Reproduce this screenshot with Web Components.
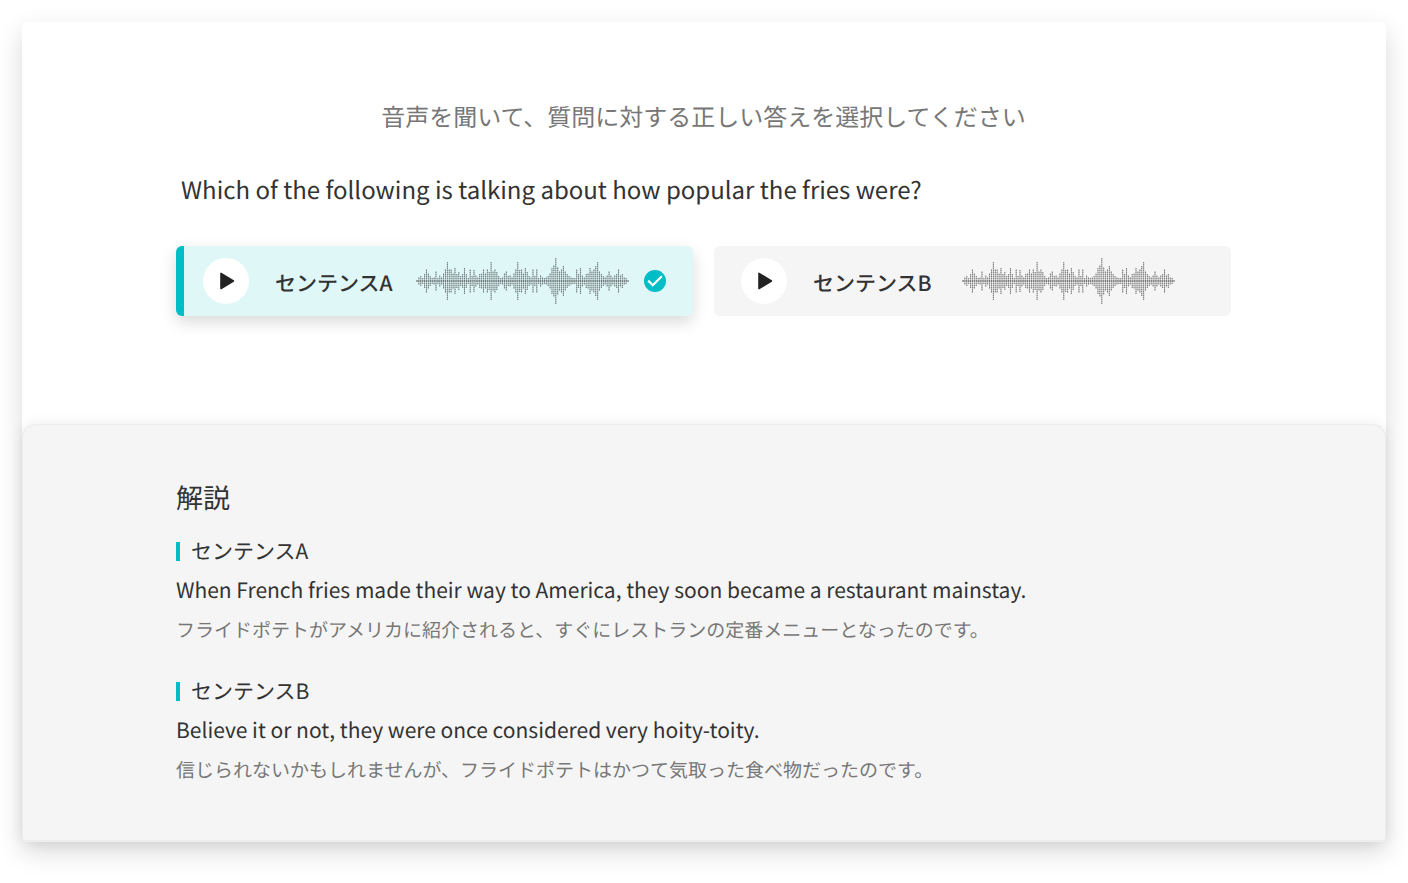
<!DOCTYPE html>
<html lang="ja">
<head>
<meta charset="utf-8">
<meta name="viewport" content="width=device-width, initial-scale=1">
<title>リスニング</title>
<style>
  body {
    box-sizing: border-box;
    min-height: 100vh;
    margin: 0;
    padding: 22px;
    background: #fff;
    color: #333;
    font-family: "Noto Sans CJK JP", "Noto Sans", sans-serif;
    text-rendering: geometricPrecision;
    --accent: #00bdc6;
    --accent-light: #dff7f7;
    --surface: #f5f5f5;
    --muted: #777;
  }
</style>
</head>
<body>
<quiz-card>
  <quiz-question instruction="音声を聞いて、質問に対する正しい答えを選択してください">
    Which of the following is talking about how popular the fries were?
    <audio-choice slot="choices" name="センテンスA" selected></audio-choice>
    <audio-choice slot="choices" name="センテンスB"></audio-choice>
  </quiz-question>
  <quiz-explanation slot="explanation" heading="解説">
    <sentence-note name="センテンスA">
      When French fries made their way to America, they soon became a restaurant mainstay.
      <span slot="translation">フライドポテトがアメリカに紹介されると、すぐにレストランの定番メニューとなったのです。</span>
    </sentence-note>
    <sentence-note name="センテンスB">
      Believe it or not, they were once considered very hoity-toity.
      <span slot="translation">信じられないかもしれませんが、フライドポテトはかつて気取った食べ物だったのです。</span>
    </sentence-note>
  </quiz-explanation>
</quiz-card>

<script>
function makeTemplate(html) {
  const template = document.createElement("template");
  template.innerHTML = html;
  return template;
}

const cardTemplate = makeTemplate(`
  <style>
    :host {
      display: block;
      border-radius: 5px;
      background: #fff;
      box-shadow: 0 10px 26px rgba(0, 0, 0, 0.15);
    }
  </style>
  <main>
    <slot></slot>
    <slot name="explanation"></slot>
  </main>
`);

class QuizCard extends HTMLElement {
  constructor() {
    super();
    this.attachShadow({mode: "open"});
    this.shadowRoot.appendChild(cardTemplate.content.cloneNode(true));
  }
}

const questionTemplate = makeTemplate(`
  <style>
    :host {
      display: block;
      padding: 76px 155px 108px 154px;
    }

    .instruction {
      margin: 0 0 37px;
      font-size: 24px;
      line-height: 36px;
      color: var(--muted);
      text-align: center;
    }

    .question {
      margin: 0 0 39px;
      padding-left: 5px;
      font-size: 24px;
      font-weight: 400;
      line-height: 36px;
    }

    .choices {
      display: grid;
      grid-template-columns: repeat(auto-fit, minmax(500px, 1fr));
      gap: 21px;
    }
  </style>
  <p class="instruction"></p>
  <h1 class="question"><slot></slot></h1>
  <div class="choices" role="radiogroup"><slot name="choices"></slot></div>
`);

class QuizQuestion extends HTMLElement {
  constructor() {
    super();
    this.attachShadow({mode: "open"});
    this.shadowRoot.appendChild(questionTemplate.content.cloneNode(true));
    this.shadowRoot.querySelector(".instruction").textContent = this.getAttribute("instruction");
  }

  connectedCallback() {
    // Only one choice stays selected
    this.addEventListener("choice-selected", (event) => {
      this.querySelectorAll("audio-choice").forEach((choice) => {
        choice.toggleAttribute("selected", choice === event.target);
      });
    });
  }
}

const choiceTemplate = makeTemplate(`
  <style>
    :host {
      display: flex;
      align-items: center;
      box-sizing: border-box;
      height: 70px;
      padding: 0 27px;
      border-radius: 6px;
      background: var(--surface);
    }

    :host([selected]) {
      background: linear-gradient(to right, var(--accent) 8px, var(--accent-light) 8px);
      box-shadow: 0 6px 16px rgba(0, 0, 0, 0.15);
    }

    .play {
      display: grid;
      place-items: center;
      flex: none;
      width: 46px;
      height: 46px;
      padding: 0;
      border: none;
      border-radius: 50%;
      background: #fff;
      cursor: pointer;
    }

    label {
      margin: 4px 30px 0 26px;
      font-size: 21px;
      font-weight: 500;
      line-height: 32px;
      white-space: nowrap;
      cursor: pointer;
    }

    :host([selected]) label {
      margin-right: 23px;
    }

    .mark {
      display: grid;
      flex: none;
      width: 22px;
      height: 22px;
      margin-left: 15px;
    }

    .mark > * {
      grid-area: 1 / 1;
      width: 22px;
      height: 22px;
      margin: 0;
    }

    input {
      appearance: none;
      border-radius: 50%;
      cursor: pointer;
    }

    input:checked {
      background: var(--accent);
    }

    .tick {
      visibility: hidden;
      pointer-events: none;
    }

    input:checked + .tick {
      visibility: visible;
    }
  </style>
  <button class="play" type="button">
    <svg width="18" height="18" viewBox="0 0 18 18" aria-hidden="true">
      <path d="M4 1.4v15.2L16.4 9z" fill="#222" stroke="#222" stroke-width="1.6" stroke-linejoin="round"/>
    </svg>
  </button>
  <label for="choice"></label>
  <sound-wave></sound-wave>
  <span class="mark">
    <input id="choice" type="radio">
    <svg class="tick" viewBox="0 0 22 22" aria-hidden="true">
      <path d="M4.2 10.6l4.6 4.6 9-9" fill="none" stroke="#fff" stroke-width="2.2"/>
    </svg>
  </span>
`);

class AudioChoice extends HTMLElement {
  static get observedAttributes() {
    return ["selected"];
  }

  constructor() {
    super();
    this.attachShadow({mode: "open"});
    this.shadowRoot.appendChild(choiceTemplate.content.cloneNode(true));
    this.radio = this.shadowRoot.querySelector("input");
    this.shadowRoot.querySelector("label").textContent = this.getAttribute("name");
    this.shadowRoot.querySelector(".play").setAttribute("aria-label", this.getAttribute("name"));
  }

  connectedCallback() {
    this.radio.addEventListener("change", () => {
      this.dispatchEvent(new CustomEvent("choice-selected", {bubbles: true}));
    });
  }

  attributeChangedCallback() {
    this.radio.checked = this.hasAttribute("selected");
  }
}

// Half height of every bar, left to right
const waveLevels = [
  1, 4, 5, 3, 7, 12, 8, 5, 3, 4, 10, 3, 6, 4, 8, 12, 19, 12, 12, 8, 13, 7, 9, 5, 7, 13, 7, 3,
  12, 5, 11, 6, 4, 7, 8, 12, 8, 12, 9, 19, 10, 12, 9, 5, 3, 4, 8, 10, 5, 6, 4, 8, 12, 19,
  11, 12, 8, 13, 9, 5, 4, 12, 5, 12, 3, 6, 4, 3, 4, 5, 8, 13, 16, 23, 14, 10, 12, 15, 10,
  7, 5, 4, 3, 3, 12, 7, 13, 6, 4, 7, 8, 13, 10, 12, 15, 19, 10, 7, 5, 4, 6, 10, 6, 4, 6,
  7, 12, 6, 7, 4, 3, 1
];

class SoundWave extends HTMLElement {
  constructor() {
    super();
    this.attachShadow({mode: "open"});
    const width = waveLevels.length * 2;
    const bars = waveLevels.map((level, i) => `M${i * 2 + 1} 24v${-level}M${i * 2 + 1} 24v${level}`).join("");
    this.shadowRoot.innerHTML = `
      <style>
        :host {
          display: block;
          flex: none;
          width: 213px;
          height: 48px;
        }

        svg {
          display: block;
          width: 100%;
          height: 100%;
        }
      </style>
      <svg viewBox="0 0 ${width} 48" preserveAspectRatio="none" aria-hidden="true">
        <g fill="none" stroke="#333">
          <path d="${bars}" stroke-width="1" stroke-opacity="0.35"/>
          <path d="${bars}" stroke-width="1.2" stroke-opacity="0.4" stroke-dasharray="1 1"/>
          <path d="M1 24H${width - 1}" stroke-width="1" stroke-opacity="0.4" stroke-dasharray="1 1"/>
        </g>
      </svg>
    `;
  }
}

const explanationTemplate = makeTemplate(`
  <style>
    :host {
      display: block;
      padding: 53px 155px 53px 154px;
      border-radius: 14px 14px 5px 5px;
      background: var(--surface);
      box-shadow: inset 0 0 0 1px #ededed, inset 0 -1px 0 1px #ededed, 0 0 14px rgba(0, 0, 0, 0.08);
    }

    h2 {
      margin: 0 0 15px;
      font-size: 27px;
      font-weight: 400;
      line-height: 40px;
    }

    .notes {
      display: grid;
      gap: 23px;
    }
  </style>
  <h2></h2>
  <div class="notes"><slot></slot></div>
`);

class QuizExplanation extends HTMLElement {
  constructor() {
    super();
    this.attachShadow({mode: "open"});
    this.shadowRoot.appendChild(explanationTemplate.content.cloneNode(true));
    this.shadowRoot.querySelector("h2").textContent = this.getAttribute("heading");
  }
}

const noteTemplate = makeTemplate(`
  <style>
    :host {
      display: block;
      line-height: 39px;
    }

    h3 {
      display: flex;
      align-items: center;
      gap: 11px;
      margin: 0;
      font-size: 21px;
      font-weight: 400;
    }

    h3::before {
      content: "";
      width: 4px;
      height: 19px;
      background: var(--accent);
    }

    p {
      margin: 0;
      font-size: 21px;
    }

    .translation {
      font-size: 19px;
      color: var(--muted);
    }
  </style>
  <h3></h3>
  <p><slot></slot></p>
  <p class="translation"><slot name="translation"></slot></p>
`);

class SentenceNote extends HTMLElement {
  constructor() {
    super();
    this.attachShadow({mode: "open"});
    this.shadowRoot.appendChild(noteTemplate.content.cloneNode(true));
    this.shadowRoot.querySelector("h3").textContent = this.getAttribute("name");
  }
}

window.customElements.define("quiz-card", QuizCard);
window.customElements.define("quiz-question", QuizQuestion);
window.customElements.define("audio-choice", AudioChoice);
window.customElements.define("sound-wave", SoundWave);
window.customElements.define("quiz-explanation", QuizExplanation);
window.customElements.define("sentence-note", SentenceNote);
</script>
</body>
</html>
